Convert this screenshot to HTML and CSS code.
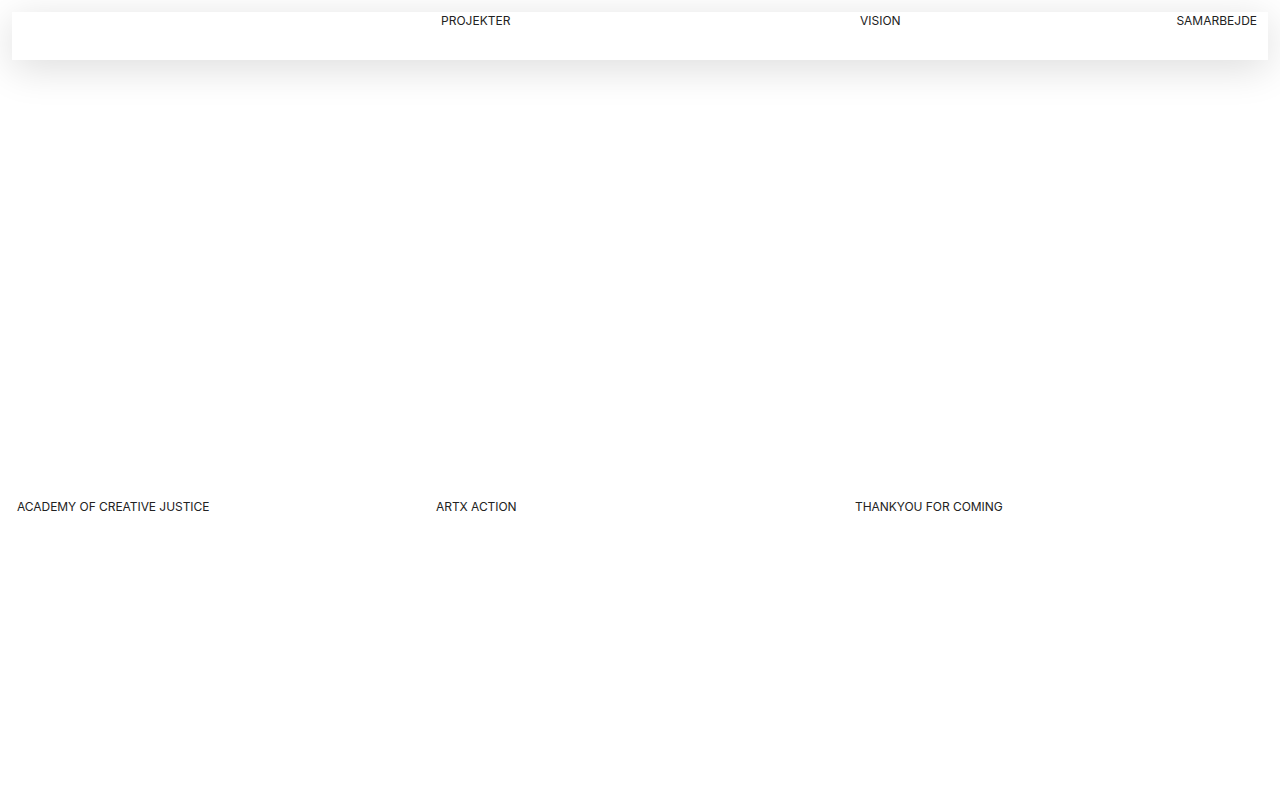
FILE: index.html
```html
<!DOCTYPE html>
<html lang="da">
<head>
<meta charset="utf-8">
<title>Projekter</title>
<link rel="stylesheet" href="styles.css">
</head>
<body>
<div class="page">
  <header class="site-header">
    <div class="col"></div>
    <nav class="col"><a href="#">PROJEKTER</a></nav>
    <nav class="col split"><a href="#">VISION</a><a href="#">SAMARBEJDE</a></nav>
  </header>
  <main class="grid">
    <article class="card">
      <div class="thumb"></div>
      <h2 class="title">ACADEMY OF CREATIVE JUSTICE</h2>
    </article>
    <article class="card">
      <div class="thumb"></div>
      <h2 class="title">ARTX ACTION</h2>
    </article>
    <article class="card">
      <div class="thumb"></div>
      <h2 class="title">THANKYOU FOR COMING</h2>
    </article>
    <article class="card">
      <div class="thumb"></div>
      <h2 class="title"></h2>
    </article>
    <article class="card">
      <div class="thumb"></div>
      <h2 class="title"></h2>
    </article>
    <article class="card">
      <div class="thumb"></div>
      <h2 class="title"></h2>
    </article>
  </main>
</div>
</body>
</html>
```

FILE: styles.css
```css
* { box-sizing: border-box; }

html, body {
  margin: 0;
  background: #fff;
  color: #222;
  font-family: Inter, "Liberation Sans", sans-serif;
  font-size: 12px;
  line-height: 15px;
}

a { color: inherit; text-decoration: none; }

.page {
  padding: 12px 12px 0;
}

/* three equal columns shared by the header and the project grid */
.site-header,
.grid {
  display: grid;
  grid-template-columns: 419px 419px 1fr;
}

.site-header {
  height: 48px;
  background: #fff;
  box-shadow: 0 8px 40px rgba(0, 0, 0, 0.14);
}

.site-header .col {
  padding: 1px 11px 0 10px;
}

.site-header .split {
  display: flex;
  justify-content: space-between;
}

.grid {
  padding-top: 20px;
  row-gap: 40px;
}

.card {
  padding: 0 5px;
}

.thumb {
  height: 418px;
}

.title {
  margin: 0;
  padding-top: 1px;
  font-size: 12px;
  font-weight: 400;
  line-height: 15px;
  min-height: 15px;
  letter-spacing: -0.05px;
}
```
